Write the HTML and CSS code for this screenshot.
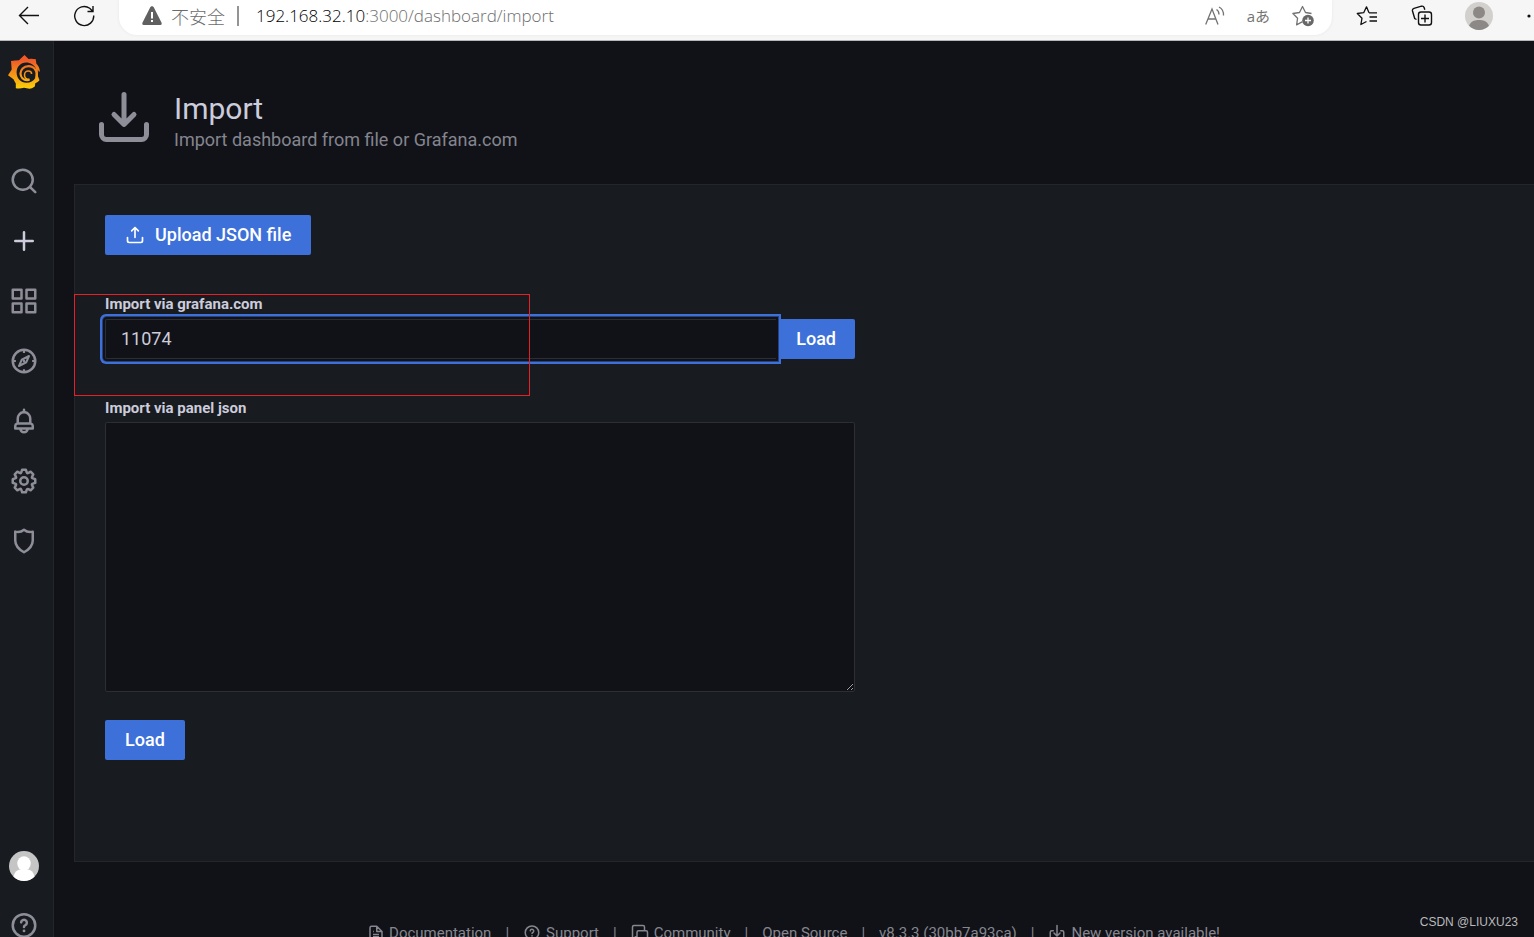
FILE: index.html
```html
<!DOCTYPE html>
<html lang="en">
<head>
<meta charset="utf-8">
<title>Import - Grafana</title>
<link rel="stylesheet" href="styles.css">
</head>
<body>
<svg width="0" height="0" class="sprite" aria-hidden="true">
  <symbol id="import" viewBox="0 0 24 24"><path d="M21,14a1,1,0,0,0-1,1v4a1,1,0,0,1-1,1H5a1,1,0,0,1-1-1V15a1,1,0,0,0-2,0v4a3,3,0,0,0,3,3H19a3,3,0,0,0,3-3V15A1,1,0,0,0,21,14Zm-9.71,1.71a1,1,0,0,0,.33.21.94.94,0,0,0,.76,0,1,1,0,0,0,.33-.21l4-4a1,1,0,0,0-1.42-1.42L13,12.59V3a1,1,0,0,0-2,0v9.59l-2.29-2.3a1,1,0,1,0-1.42,1.42Z"/></symbol>
  <symbol id="help" viewBox="0 0 24 24"><g fill="none" stroke="currentColor" stroke-width="2" stroke-linecap="round"><circle cx="12" cy="11.500" r="9"/><path d="M9.700 9.100a2.300 2.300 0 1 1 3.400 2.200q-1.100.5-1.100 1.400"/></g><circle cx="12" cy="15.900" r="1.100"/></symbol>
</svg>

<header class="browser">
  <button class="tool" aria-label="Back"><svg width="22" height="22" viewBox="0 0 22 22" fill="none" stroke="#111" stroke-width="1.4"><path d="M21 10.500H1.500M10 2 1.500 10.500 10 19"/></svg></button>
  <button class="tool reload" aria-label="Refresh"><svg width="22" height="22" viewBox="0 0 22 22" fill="none" stroke="#111" stroke-width="1.4"><path d="M20.700 10.500A9.500 9.500 0 1 1 16.700 3.300L19.500 6M20 1v5.500h-5.500"/></svg></button>
  <div class="address">
    <svg class="warn" width="20" height="20" viewBox="0 0 20 20"><path d="M10 0 11.600.9 19.700 17Q20 19 18.500 19H1.500Q0 19 .3 17L8.400.9Z" fill="#606060"/><path d="M9 6h2v6.500H9zM9 14h2v2H9z" fill="#fff"/></svg>
    <span class="unsafe">不安全</span>
    <span class="rule"></span>
    <span class="url"><b>192.168.32.10</b>:3000/dashboard/import</span>
    <button class="tool read" aria-label="Read aloud"><svg width="20" height="20" viewBox="0 0 20 20" fill="none" stroke="#737373" stroke-width="1.3"><path d="M.7 18.500 7 3l6 15.500M3 13h8M11.500 3.500q2.500 1.500 2.500 5M14 1q4.700 2.300 4.500 8.500"/></svg></button>
    <button class="tool translate" aria-label="Translate">aあ</button>
    <button class="tool" aria-label="Add to favorites"><svg width="22" height="22" viewBox="0 0 22 22"><path d="M19.500 8.500 13.500 7.500 10.500 1.500 7.500 7.500.9 8.500 5.600 13.200 4.600 19.800 10.500 16.700" fill="none" stroke="#737373" stroke-width="1.300" stroke-linejoin="round"/><circle cx="16" cy="15.500" r="5.800" fill="#686868"/><path d="M16 12.500v6M13 15.500h6" stroke="#fff" stroke-width="1.300"/></svg></button>
  </div>
  <button class="tool favs" aria-label="Favorites"><svg width="22" height="22" viewBox="0 0 22 22" fill="none" stroke="#111" stroke-width="1.3" stroke-linejoin="round"><path d="M13 7.800 10.500 1.800 7.700 7.700 1.300 8.500 6 13.200 4.900 19.500 10.500 16.500M13 7.800h8M13.500 12H21M13.500 16H21"/></svg></button>
  <button class="tool coll" aria-label="Collections"><svg width="22" height="22" viewBox="0 0 22 22" fill="none" stroke="#111" stroke-width="1.400"><rect x="7.500" y="7" width="13" height="13" rx="2.500"/><path d="M14 9.500v8M10 13.500h8M5.500 14.500 3.700 13.500 1.500 6Q1 4 3 3.300L10.500 1.200Q12.500.7 13.200 2.700L13.800 4.700"/></svg></button>
  <button class="tool profile" aria-label="Profile"><svg width="28" height="28" viewBox="0 0 28 28"><circle cx="14" cy="14" r="14" fill="#d2d0cd"/><circle cx="14" cy="10.500" r="6" fill="#8b8885"/><path d="M4 23.800C6 19 10 18 14 18s8 1 10 5.800A14 14 0 0 1 4 23.800Z" fill="#8b8885"/></svg></button>
  <button class="tool more" aria-label="More"><svg width="20" height="4" viewBox="0 0 20 4"><circle cx="2" cy="2" r="1.600"/><circle cx="9" cy="2" r="1.600"/><circle cx="16" cy="2" r="1.600"/></svg></button>
</header>

<div class="app">
  <nav class="sidebar">
    <a href="#" class="logo" aria-label="Grafana">
      <svg width="34" height="36" viewBox="0 0 34 36">
        <defs><linearGradient id="sun" gradientUnits="userSpaceOnUse" x1="0" y1="1" x2="0" y2="35"><stop offset=".15" stop-color="#f05a28"/><stop offset=".95" stop-color="#fbca0a"/></linearGradient></defs>
        <path fill="url(#sun)" fill-rule="evenodd" d="M17.500 1 21.500 5Q25 4.500 28.800 5.200L29.300 9.500Q32.500 12.500 32.900 17.500L31.800 17.500 30.800 15.500 30.900 22 32.500 26.200Q31 28 28.300 29.200L27.800 32.500 25 34.200 22.400 34.800 17 33.800Q13 35 8.800 34.300L8.800 29.500Q7.500 27.600 6.500 25.300L1 21.300 4.700 15.500 4 7Q8 6.500 12 6.300 14.800 3.500 17.500 1ZM19 8.600C13.500 8.600 9.600 13 9.600 18.500S13.700 28.700 19.500 28.700C23.300 28.700 26.700 27 28.300 24L29 15C27.500 11.200 23.500 8.600 19 8.600Z"/>
        <path d="M29.400 24.500C31.400 17 27 12.200 21.500 12.200c-5 0-8 3.600-8 7.400 0 3.700 2.800 6.600 6.600 6.600 1 0 1.900-.3 2.400-.7" fill="none" stroke="url(#sun)" stroke-width="2.200"/>
        <path d="M22.500 25.300c-3.200 0-5-2-5-4.400 0-2.300 1.700-4 3.800-4 2 0 3.300 1.400 3.300 3" fill="none" stroke="url(#sun)" stroke-width="1.500"/>
      </svg>
    </a>
    <ul class="menu">
      <li><a href="#" aria-label="Search"><svg class="icon" viewBox="0 0 24 24"><path d="M21.710,20.290,18,16.610A9,9,0,1,0,16.610,18l3.680,3.680a1,1,0,0,0,1.420,0A1,1,0,0,0,21.710,20.290ZM11,18a7,7,0,1,1,7-7A7,7,0,0,1,11,18Z"/></svg></a></li>
      <li><a href="#" class="current" aria-label="Create"><svg class="icon" viewBox="0 0 24 24"><path d="M19,11H13V5a1,1,0,0,0-2,0v6H5a1,1,0,0,0,0,2h6v6a1,1,0,0,0,2,0V13h6a1,1,0,0,0,0-2Z"/></svg></a></li>
      <li><a href="#" aria-label="Dashboards"><svg class="icon" viewBox="0 0 24 24"><path d="M10,13H3a1,1,0,0,0-1,1v7a1,1,0,0,0,1,1h7a1,1,0,0,0,1-1V14A1,1,0,0,0,10,13ZM9,20H4V15H9ZM21,2H14a1,1,0,0,0-1,1v7a1,1,0,0,0,1,1h7a1,1,0,0,0,1-1V3A1,1,0,0,0,21,2ZM20,9H15V4h5Zm1,4H14a1,1,0,0,0-1,1v7a1,1,0,0,0,1,1h7a1,1,0,0,0,1-1V14A1,1,0,0,0,21,13Zm-1,7H15V15h5ZM10,2H3A1,1,0,0,0,2,3v7a1,1,0,0,0,1,1h7a1,1,0,0,0,1-1V3A1,1,0,0,0,10,2ZM9,9H4V4H9Z"/></svg></a></li>
      <li><a href="#" aria-label="Explore"><svg class="icon" viewBox="0 0 24 24"><g fill="none" stroke="currentColor" stroke-width="2"><circle cx="12" cy="12" r="9"/><path stroke-width="1.700" d="M12 3v2.500M12 18.500V21M3 12h2.500M18.500 12H21"/><path stroke-width="1.600" stroke-linejoin="round" d="M16 8 13.800 13 8 16 10.200 11Z"/></g><circle cx="12" cy="12" r="1"/></svg></a></li>
      <li><a href="#" aria-label="Alerting"><svg class="icon" viewBox="0 0 24 24"><path d="M18,13.180V10a6,6,0,0,0-5-5.910V3a1,1,0,0,0-2,0V4.090A6,6,0,0,0,6,10v3.180A3,3,0,0,0,4,16v2a1,1,0,0,0,1,1H8.140a4,4,0,0,0,7.720,0H19a1,1,0,0,0,1-1V16A3,3,0,0,0,18,13.180ZM8,10a4,4,0,0,1,8,0v3H8Zm4,10a2,2,0,0,1-1.720-1h3.440A2,2,0,0,1,12,20Zm6-3H6V16a1,1,0,0,1,1-1H17a1,1,0,0,1,1,1Z"/></svg></a></li>
      <li><a href="#" aria-label="Configuration"><svg class="icon" viewBox="0 0 24 24"><path d="M21.320,9.550l-1.890-.63.890-1.780A1,1,0,0,0,20.130,6L18,3.870a1,1,0,0,0-1.150-.19l-1.780.89-.63-1.890A1,1,0,0,0,13.500,2h-3a1,1,0,0,0-.95.680L8.920,4.570,7.140,3.680A1,1,0,0,0,6,3.870L3.870,6a1,1,0,0,0-.19,1.150l.89,1.780-1.890.63A1,1,0,0,0,2,10.500v3a1,1,0,0,0,.68.950l1.890.63-.89,1.780A1,1,0,0,0,3.870,18L6,20.130a1,1,0,0,0,1.150.19l1.780-.89.63,1.890a1,1,0,0,0,.95.680h3a1,1,0,0,0,.95-.68l.63-1.890,1.780.89A1,1,0,0,0,18,20.130L20.130,18a1,1,0,0,0,.19-1.150l-.89-1.780,1.890-.63A1,1,0,0,0,22,13.500v-3A1,1,0,0,0,21.320,9.550ZM20,12.780l-1.200.4A2,2,0,0,0,17.640,16l.57,1.140-1.100,1.100L16,17.640a2,2,0,0,0-2.790,1.160l-.4,1.200H11.220l-.4-1.200A2,2,0,0,0,8,17.640l-1.140.57-1.100-1.100L6.360,16A2,2,0,0,0,5.200,13.180L4,12.780V11.220l1.200-.4A2,2,0,0,0,6.360,8L5.790,6.890l1.100-1.100L8,6.360A2,2,0,0,0,10.820,5.200l.4-1.200h1.560l.4,1.200A2,2,0,0,0,16,6.360l1.140-.57,1.100,1.100L17.640,8a2,2,0,0,0,1.160,2.790l1.200.4ZM12,8a4,4,0,1,0,4,4A4,4,0,0,0,12,8Zm0,6a2,2,0,1,1,2-2A2,2,0,0,1,12,14Z"/></svg></a></li>
      <li><a href="#" aria-label="Server admin"><svg class="icon" viewBox="0 0 24 24"><path fill="none" stroke="currentColor" stroke-width="2" stroke-linejoin="round" d="M12 3Q9 5.500 5 4.500V11.500Q5 17 12 21 19 17 19 11.500V4.500Q15 5.500 12 3Z"/></svg></a></li>
    </ul>
    <ul class="menu">
      <li><a href="#" aria-label="Account"><svg width="30" height="30" viewBox="0 0 30 30"><circle cx="15" cy="15" r="15" fill="#c5c5c5"/><ellipse cx="15" cy="12.500" rx="6.700" ry="7.300" fill="#fff"/><path d="M4.500 25.700Q6 19 11 18.500h8Q24 19 25.500 25.700A15 15 0 0 1 4.500 25.700Z" fill="#fff"/></svg></a></li>
      <li><a href="#" aria-label="Help"><svg class="icon" viewBox="0 0 24 24"><use href="#help"/></svg></a></li>
    </ul>
  </nav>

  <div class="page">
    <div class="page-header">
      <svg class="page-icon" viewBox="0 0 24 24"><use href="#import"/></svg>
      <div>
        <h1>Import</h1>
        <p>Import dashboard from file or Grafana.com</p>
      </div>
    </div>
    <main class="panel">
      <form class="form">
        <button type="button" class="btn upload"><svg width="20" height="20" viewBox="0 0 24 24"><path d="M8.710,7.710,11,5.410V15a1,1,0,0,0,2,0V5.410l2.290,2.300a1,1,0,0,0,1.420,0,1,1,0,0,0,0-1.420l-4-4a1,1,0,0,0-.33-.21,1,1,0,0,0-.76,0,1,1,0,0,0-.33.210l-4,4A1,1,0,1,0,8.710,7.710ZM21,14a1,1,0,0,0-1,1v4a1,1,0,0,1-1,1H5a1,1,0,0,1-1-1V15a1,1,0,0,0-2,0v4a3,3,0,0,0,3,3H19a3,3,0,0,0,3-3V15A1,1,0,0,0,21,14Z"/></svg>Upload JSON file</button>
        <label for="gcom">Import via grafana.com</label>
        <div class="field">
          <input id="gcom" type="text" value="11074">
          <button type="button" class="btn load">Load</button>
        </div>
        <label for="json">Import via panel json</label>
        <textarea id="json"></textarea>
        <button type="button" class="btn">Load</button>
      </form>
      <div class="highlight"></div>
    </main>
    <footer class="footer">
      <a href="#"><svg width="16" height="18" viewBox="2 0 20 24" fill="none" stroke="currentColor" stroke-width="2" stroke-linejoin="round"><path d="M13 3H6Q4 3 4 5v14q0 2 2 2h12q2 0 2-2V10ZM13 3v7h7M8 10h1M8 14h8M8 17h8"/></svg>Documentation</a>
      <i>|</i>
      <a href="#"><svg width="18" height="18" viewBox="0 0 24 24"><use href="#help"/></svg>Support</a>
      <i>|</i>
      <a href="#"><svg width="18" height="18" viewBox="0 0 24 24" fill="none" stroke="currentColor" stroke-width="2" stroke-linejoin="round"><path d="M8 17H6L2 21V4q0-2 2-2h12q2 0 2 2v4M10 9h10q2 0 2 2v11l-3-3h-9q-2 0-2-2v-6q0-2 2-2Z"/></svg>Community</a>
      <i>|</i>
      <a href="#">Open Source</a>
      <i>|</i>
      <span>v8.3.3 (30bb7a93ca)</span>
      <i>|</i>
      <a href="#"><svg width="18" height="18" viewBox="0 0 24 24" fill="none" stroke="currentColor" stroke-width="2" stroke-linecap="round"><path d="M12 2v14M8 12l4 4 4-4M7 9H5q-2 0-2 2v7q0 2 2 2h14q2 0 2-2v-7q0-2-2-2h-2"/></svg>New version available!</a>
    </footer>
  </div>
</div>
<div class="watermark">CSDN @LIUXU23</div>
</body>
</html>
```
FILE: styles.css
```css
* { box-sizing: border-box; }
body {
  margin: 0;
  height: 100vh;
  display: flex;
  flex-direction: column;
  overflow: hidden;
  background: #111217;
  color: #ccccdc;
  font: 18px/24px Roboto, "Liberation Sans", sans-serif;
}
.sprite { position: absolute; }
svg { display: block; flex: none; fill: currentColor; }
svg[fill="none"] { fill: none; }
a { color: inherit; text-decoration: none; }
button { font: inherit; cursor: pointer; }

.browser {
  flex: none;
  display: flex;
  align-items: flex-start;
  height: 41px;
  padding-left: 18px;
  background: #f6f6f6;
  border-bottom: 1px solid #b8b8b8;
  overflow: hidden;
}
.tool {
  flex: none;
  display: flex;
  align-items: center;
  height: 32px;
  padding: 0;
  border: 0;
  background: none;
  color: #111;
}
.reload { margin-left: 33px; }
.address {
  flex: 1;
  display: flex;
  align-items: center;
  height: 35px;
  margin-left: 24px;
  padding: 0 18px 4px 23px;
  border-radius: 0 0 18px 18px;
  background: #fff;
  box-shadow: 0 0 3px #e4e4e4;
}
.unsafe {
  margin-left: 9px;
  color: #6b6b6b;
  font-family: "Noto Sans CJK SC", sans-serif;
  font-weight: 300;
}
.rule { width: 2px; height: 20px; margin: 0 17px 0 12px; background: #949494; }
.url {
  flex: 1;
  color: #6e6e6e;
  font-family: "Open Sans", "Noto Sans", sans-serif;
  font-size: 17px;
  font-weight: 300;
}
.url b { color: #000; font-weight: 300; }
.translate {
  margin: 0 22px;
  color: #737373;
  font-family: "Open Sans", "Noto Sans CJK JP", sans-serif;
  font-size: 15px;
}
.favs { margin-left: 24px; }
.coll { margin-left: 33px; }
.profile { margin-left: 32px; }
.more { width: 7px; margin-left: 34px; }

.app { flex: 1; display: flex; min-height: 0; }
.sidebar {
  flex: none;
  width: 54px;
  display: flex;
  flex-direction: column;
  padding-right: 5px;
  background: #181b1f;
  border-right: 1px solid #24262b;
  color: #8e8e99;
}
.logo { display: flex; justify-content: center; padding: 13px 0 61px; }
.menu { margin: 0; padding: 0; list-style: none; }
.menu a {
  display: flex;
  align-items: center;
  justify-content: center;
  height: 60px;
}
.menu + .menu { margin-top: auto; margin-bottom: -19px; }
.menu .current { color: #ccccdc; }
.icon { width: 30px; height: 30px; }

.page { flex: 1; min-width: 0; padding-left: 20px; overflow: hidden; }
.page-header { display: flex; gap: 20px; padding: 46px 20px 34px; }
.page-icon { width: 60px; height: 60px; color: #8e8e99; }
h1 { margin: 3px 0 2px; font-size: 30px; line-height: 38px; font-weight: 400; }
p { margin: 0; line-height: 20px; color: #84858f; }
.panel {
  position: relative;
  padding: 30px 30px 101px;
  background: #181b1f;
  border: 1px solid #24262b;
  border-right: 0;
}
.form {
  display: flex;
  flex-direction: column;
  align-items: flex-start;
  max-width: 750px;
}
.btn {
  height: 40px;
  padding: 0 20px;
  border: 0;
  border-radius: 2px;
  background: #3d71d9;
  color: #fff;
  font-weight: 500;
}
.upload { display: flex; align-items: center; gap: 10px; margin-bottom: 39px; }
label { font-size: 15px; line-height: 20px; font-weight: 700; }
.field { display: flex; width: 100%; margin: 5px 0 39px; }
input, textarea {
  display: block;
  border: 1px solid #2c2e34;
  border-radius: 2px;
  background: #111217;
  color: #ccccdc;
  font: inherit;
}
input {
  position: relative;
  z-index: 1;
  flex: 1;
  min-width: 0;
  height: 40px;
  padding: 0 16px 2px 15px;
  border-right: 0;
  border-radius: 2px 0 0 2px;
  outline: 0;
  box-shadow: 0 0 0 2px #111217, 0 0 0 3px #26417c, 0 0 0 5px #3d71d9;
}
.load { padding: 0 19px 0 20px; border-radius: 0 2px 2px 0; }
textarea { width: 100%; height: 270px; margin: 4px 0 28px; padding: 8px; color-scheme: dark; }
.highlight {
  position: absolute;
  top: 109px;
  left: -1px;
  width: 456px;
  height: 102px;
  border: 1px solid #e81f26;
  z-index: 2;
  pointer-events: none;
}
.footer {
  display: flex;
  justify-content: center;
  align-items: center;
  gap: 14px;
  padding: 61px 20px 20px 0;
  font-size: 15px;
  line-height: 20px;
  color: #85868f;
}
.footer a { display: flex; align-items: center; gap: 5px; }
.footer i { font-style: normal; }
.watermark {
  position: absolute;
  right: 16px;
  bottom: 6px;
  font: 12px/18px "Liberation Sans", sans-serif;
  color: #b9b9bb;
}
```
